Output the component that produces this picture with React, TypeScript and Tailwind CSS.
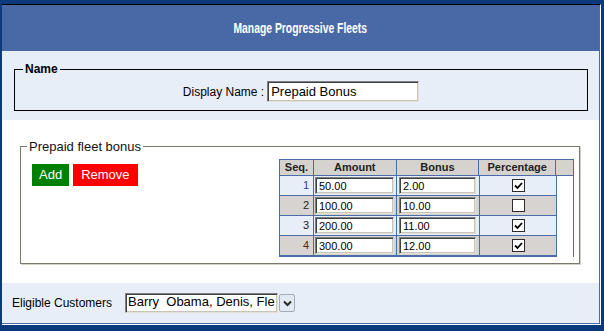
const inset =
  "border border-t-[#808080] border-l-[#808080] border-r-[#e4e0d8] border-b-[#e4e0d8] shadow-[inset_1px_1px_0_#404040,inset_-1px_-1px_0_#c8c4b8] bg-white";

const rows = [
  { seq: "1", amount: "50.00", bonus: "2.00", pct: true, seqColor: "text-[#1d3f94]" },
  { seq: "2", amount: "100.00", bonus: "10.00", pct: false, seqColor: "text-[#222]" },
  { seq: "3", amount: "200.00", bonus: "11.00", pct: true, seqColor: "text-[#222]" },
  { seq: "4", amount: "300.00", bonus: "12.00", pct: true, seqColor: "text-[#5a1c1c]" },
];

function Check({ on }: { on: boolean }) {
  return (
    <span className="w-[13px] h-[13px] border border-[#2b2b2b] bg-white flex items-center justify-center">
      {on && (
        <svg width="9" height="8" viewBox="0 0 9 8">
          <path d="M1 3.5 L3.5 6 L8 1" fill="none" stroke="#000" strokeWidth="1.8" />
        </svg>
      )}
    </span>
  );
}

function BonusGrid() {
  return (
    <div className="w-[295px] border-t border-l border-[#4a6ca8] text-[11px] leading-none">
      <div className="flex h-[16px] bg-[#d6d3ce] font-bold text-[#222]">
        <div className="w-[34px] border-r border-b border-[#4a6ca8] flex items-center justify-center">Seq.</div>
        <div className="w-[83px] border-r border-b border-[#4a6ca8] flex items-center justify-center">Amount</div>
        <div className="w-[83px] border-r border-b border-[#4a6ca8] flex items-center justify-center">Bonus</div>
        <div className="w-[77px] border-r border-b border-[#4a6ca8] flex items-center justify-center">Percentage</div>
        <div className="w-[18px] border-r border-b border-[#4a6ca8]" />
      </div>
      <div className="flex">
        <div className="w-[277px] border-b border-[#4a6ca8]">
          {rows.map((r, i) => (
            <div key={r.seq} className={`flex h-[20px] ${i % 2 === 0 ? "bg-[#e8eef7]" : "bg-[#d6d3d1]"}`}>
              <div className={`w-[34px] border-r border-b border-[#4a6ca8] flex items-center justify-end pr-[4px] ${r.seqColor}`}>
                {r.seq}
              </div>
              <div className="w-[83px] border-r border-b border-[#4a6ca8] flex items-center pl-[1px]">
                <input readOnly value={r.amount} className={`${inset} w-[79px] h-[17px] px-[3px] text-[11px] text-black outline-none`} />
              </div>
              <div className="w-[83px] border-r border-b border-[#4a6ca8] flex items-center pl-[2px]">
                <input readOnly value={r.bonus} className={`${inset} w-[77px] h-[17px] px-[3px] text-[11px] text-black outline-none`} />
              </div>
              <div className="w-[77px] border-r border-b border-[#4a6ca8] flex items-center justify-center">
                <Check on={r.pct} />
              </div>
            </div>
          ))}
        </div>
        <div className="w-[18px] border-r border-[#4a6ca8] bg-white" />
      </div>
    </div>
  );
}

export default function App() {
  return (
    <div className="w-[604px] h-[331px] bg-[#0b3a7c] pt-[4px] pl-[2px] pr-[3px] font-['Liberation_Sans',Arial,sans-serif] text-black">
      <div className="border-t border-t-black border-r border-b border-r-white border-b-white">
        <div className="border-r border-b border-[#4a6ca8]">
          <div className="h-[46px] bg-[#4869a6] flex items-center justify-center pt-[1px]">
            <h1 className="inline-block scale-x-[0.74] text-white font-bold text-[14px]">
              Manage Progressive Fleets
            </h1>
          </div>

          <div className="h-[69px] bg-[#e8eef7] pt-[11px] pl-[12px] pr-[11px]">
            <fieldset className="border border-black">
              <legend className="ml-[8px] px-[2px] font-bold text-[12px] leading-[14px]">Name</legend>
              <div className="flex items-center justify-center gap-[3px] pt-[5px] pb-[8px]">
                <label className="text-[12px]">Display Name :</label>
                <input readOnly value="Prepaid Bonus" className={`${inset} w-[152px] h-[21px] px-[3px] text-[13px] outline-none`} />
              </div>
            </fieldset>
          </div>

          <div className="h-[163px] bg-white pt-[19px] pl-[18px]">
            <fieldset className="w-[560px] border border-[#7a786c] shadow-[1px_1px_0_#d4d0c8]">
              <legend className="ml-[6px] px-[2px] text-[13px] leading-[15px] text-[#111]">Prepaid fleet bonus</legend>
              <div className="flex justify-between items-start pl-[11px] pr-[5px] pb-[6px]">
                <div className="flex gap-[4px] mt-[10px]">
                  <button className="h-[22px] px-[7px] bg-[#008000] text-white text-[13px]">Add</button>
                  <button className="h-[22px] px-[8px] bg-[#ff0000] text-white text-[13px]">Remove</button>
                </div>
                <div className="mt-[5px]">
                  <BonusGrid />
                </div>
              </div>
            </fieldset>
          </div>

          <div className="h-[40px] bg-[#e8eef7] flex items-center pl-[10px]">
            <span className="w-[113px] text-[12px]">Eligible Customers</span>
            <div className={`${inset} w-[153px] h-[20px] overflow-hidden whitespace-pre text-[13px] leading-[16px] pl-[2px]`}>
              Barry  Obama, Denis, Fle
            </div>
            <button className="ml-[1px] w-[16px] h-[18px] rounded-[2px] border border-[#a5acb5] bg-[#e3e9f3] flex items-center justify-center">
              <svg width="9" height="7" viewBox="0 0 9 7">
                <path d="M1 1.5 L4.5 5 L8 1.5" fill="none" stroke="#2a2a2a" strokeWidth="2" />
              </svg>
            </button>
          </div>
        </div>
      </div>
    </div>
  );
}
